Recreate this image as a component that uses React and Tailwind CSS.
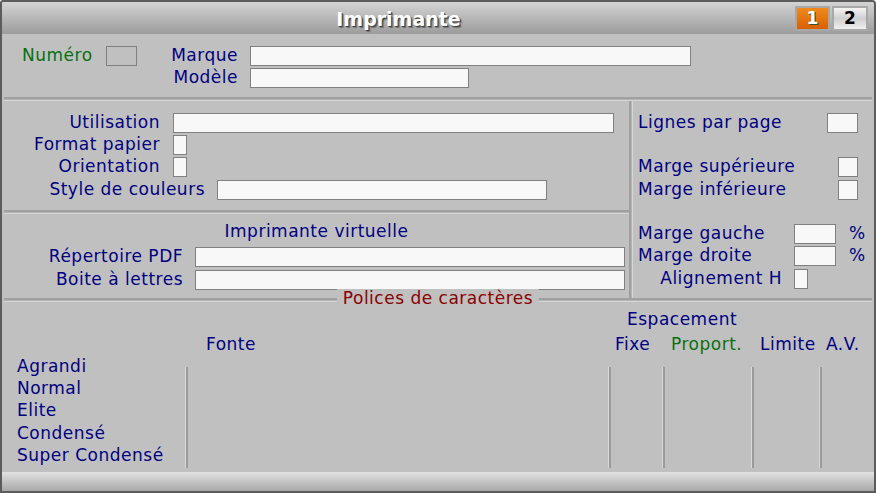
import React from 'react';

// simple sunken text box
function Box({ w, gray }) {
  return (
    <div
      className={
        'h-5 border border-[#808080] shrink-0 ' + (gray ? 'bg-[#c0c0c0]' : 'bg-[#f8f8f8]')
      }
      style={{ width: w }}
    />
  );
}

function HGroove() {
  return <div className="h-[4px] border-t-2 border-[#a0a0a0] border-b border-b-[#d6d6d6] bg-[#b4b4b4]" />;
}

function VLine({ h }) {
  return (
    <div className="w-[3px] border-l border-[#d8d8d8] bg-[#9a9a9a] shrink-0" style={{ height: h }} />
  );
}

export default function App() {
  return (
    <div className="w-[876px] h-[493px] bg-[#c0c0c0] font-['DejaVu_Sans',Verdana,sans-serif] text-[17px] tracking-[0.5px] leading-[18px] text-[#000080] border-2 border-[#5c5c5c] rounded-tl-[3px] rounded-tr-[4px] flex flex-col overflow-hidden">
      {/* title bar */}
      <div className="h-[32px] shrink-0 bg-gradient-to-b from-[#d4d4d4] to-[#9c9c9c] flex items-center">
        <div className="flex-1 text-center font-bold text-[19px] tracking-normal text-white [text-shadow:1px_1px_0_#404040,2px_2px_1px_#707070] mt-[1px]">
          Imprimante
        </div>
        <div className="flex gap-[2px] pr-[6px] tracking-normal">
          <div className="w-[35px] h-[25px] border-2 border-[#a8a8a8] bg-gradient-to-b from-[#f08a1c] to-[#d86000] flex items-center justify-center text-white font-bold text-[17px] [text-shadow:1px_1px_0_#305030]">
            1
          </div>
          <div className="w-[36px] h-[25px] border-2 border-[#a8a8a8] bg-gradient-to-b from-[#f4f4f4] via-[#d0d0d0] to-[#f0f0f0] flex items-center justify-center text-black font-bold text-[17px]">
            2
          </div>
        </div>
      </div>

      <div className="flex-1 flex flex-col px-[2px]">
        {/* header fields */}
        <div className="h-[63px] pt-[12px] flex flex-col gap-[2px]">
          <div className="flex items-start h-5">
            <div className="w-[102px] pl-[18px] text-[#087010]">Numéro</div>
            <Box w={31} gray />
            <div className="w-[101px] text-right">Marque</div>
            <div className="w-[12px]" />
            <Box w={441} />
          </div>
          <div className="flex items-start h-5">
            <div className="w-[234px] text-right">Modèle</div>
            <div className="w-[12px]" />
            <Box w={219} />
          </div>
        </div>
        <HGroove />

        {/* middle */}
        <div className="h-[197px] flex">
          <div className="w-[625px] flex flex-col">
            <div className="h-[109px] pt-[12px] flex flex-col gap-[2px]">
              <div className="flex items-start h-5">
                <div className="w-[156px] text-right">Utilisation</div>
                <div className="w-[13px]" />
                <Box w={441} />
              </div>
              <div className="flex items-start h-5">
                <div className="w-[156px] text-right">Format papier</div>
                <div className="w-[13px]" />
                <Box w={14} />
              </div>
              <div className="flex items-start h-5">
                <div className="w-[156px] text-right">Orientation</div>
                <div className="w-[13px]" />
                <Box w={14} />
              </div>
              <div className="flex items-start h-5 mt-[1px]">
                <div className="w-[201px] text-right">Style de couleurs</div>
                <div className="w-[12px]" />
                <Box w={330} />
              </div>
            </div>
            <HGroove />
            <div className="flex-1 pt-[8px] flex flex-col gap-[2px]">
              <div className="text-center h-5 mb-[3px]">Imprimante virtuelle</div>
              <div className="flex items-start h-5">
                <div className="w-[179px] text-right">Répertoire PDF</div>
                <div className="w-[12px]" />
                <Box w={430} />
              </div>
              <div className="flex items-start h-5 mt-[1px]">
                <div className="w-[179px] text-right">Boite à lettres</div>
                <div className="w-[12px]" />
                <Box w={430} />
              </div>
            </div>
          </div>
          <div className="w-[4px] border-l-2 border-[#a0a0a0] border-r border-r-[#d6d6d6] bg-[#b4b4b4]" />
          <div className="flex-1 pt-[12px] pl-[5px] flex flex-col">
            <div className="flex items-start h-5">
              <div className="w-[189px]">Lignes par page</div>
              <Box w={31} />
            </div>
            <div className="flex items-start h-5 mt-[24px]">
              <div className="w-[200px]">Marge supérieure</div>
              <Box w={20} />
            </div>
            <div className="flex items-start h-5 mt-[3px]">
              <div className="w-[200px]">Marge inférieure</div>
              <Box w={20} />
            </div>
            <div className="flex items-start h-5 mt-[24px]">
              <div className="w-[156px]">Marge gauche</div>
              <Box w={42} />
              <div className="ml-[13px]">%</div>
            </div>
            <div className="flex items-start h-5 mt-[2px]">
              <div className="w-[156px]">Marge droite</div>
              <Box w={42} />
              <div className="ml-[13px]">%</div>
            </div>
            <div className="flex items-start h-5 mt-[3px]">
              <div className="w-[144px] text-right">Alignement H</div>
              <div className="w-[12px]" />
              <Box w={14} />
            </div>
          </div>
        </div>

        {/* fonts section */}
        <div className="relative">
          <HGroove />
          <div className="absolute left-1/2 -translate-x-1/2 -top-[9px] px-[6px] bg-[#c0c0c0] text-[#8b0000]">
            Polices de caractères
          </div>
        </div>
        <div className="h-[170px] flex flex-col pt-[8px]">
          <div className="h-5 flex">
            <div className="w-[623px]" />
            <div>Espacement</div>
          </div>
          <div className="h-5 mt-[5px] flex">
            <div className="w-[202px]" />
            <div className="w-[409px]">Fonte</div>
            <div className="w-[56px]">Fixe</div>
            <div className="w-[89px] text-[#087010]">Proport.</div>
            <div className="w-[66px]">Limite</div>
            <div>A.V.</div>
          </div>
          <div className="flex mt-[2px]">
            <div className="w-[181px] pl-[13px] flex flex-col gap-[2px]">
              <div className="h-5">Agrandi</div>
              <div className="h-5">Normal</div>
              <div className="h-5">Elite</div>
              <div className="h-5 mt-[1px]">Condensé</div>
              <div className="h-5">Super Condensé</div>
            </div>
            <div className="flex mt-[10px]">
              <VLine h={101} />
              <div className="w-[420px]" />
              <VLine h={101} />
              <div className="w-[51px]" />
              <VLine h={101} />
              <div className="w-[86px]" />
              <VLine h={101} />
              <div className="w-[65px]" />
              <VLine h={101} />
            </div>
          </div>
        </div>
        <div className="h-[19px] mt-auto bg-gradient-to-b from-[#e2e2e2] to-[#a8a8a8] -mx-[2px]" />
      </div>
    </div>
  );
}
